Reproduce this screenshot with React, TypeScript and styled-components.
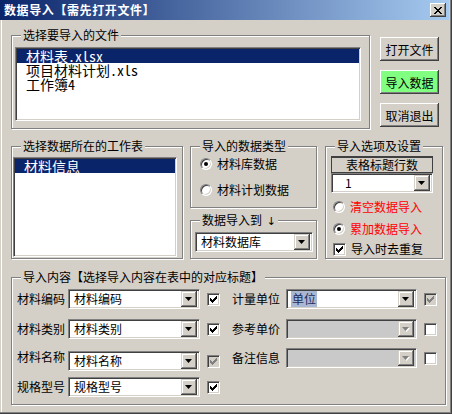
import styled, { createGlobalStyle } from "styled-components";

const FACE = "#d4d0c8";

const GlobalStyle = createGlobalStyle`
  * { box-sizing: border-box; }
  body {
    margin: 0;
    background: ${FACE};
    font-family: "Noto Sans CJK SC", "Liberation Sans", sans-serif;
    font-size: 12px;
    color: #000;
  }
`;

const files = ["材料表.xlsx", "项目材料计划.xls", "工作簿4"];

type FieldData = {
  label: string;
  value?: string;
  gap: number;
  checked?: boolean;
  checkDisabled?: boolean;
  comboDisabled?: boolean;
  highlight?: boolean;
  raise?: boolean;
};

const leftFields: FieldData[] = [
  { label: "材料编码", value: "材料编码", gap: 0, checked: true },
  { label: "材料类别", value: "材料类别", gap: 10, checked: true },
  { label: "材料名称", value: "材料名称", gap: 12, checked: true, checkDisabled: true, raise: true },
  { label: "规格型号", value: "规格型号", gap: 6, checked: true },
];

const rightFields: FieldData[] = [
  { label: "计量单位", value: "单位", gap: 0, checked: true, checkDisabled: true, highlight: true },
  { label: "参考单价", gap: 10, comboDisabled: true },
  { label: "备注信息", gap: 9, comboDisabled: true },
];

const CloseIcon = () => (
  <svg width="8" height="7" viewBox="0 0 8 7">
    <path
      d="M0 0h2v1h-2zM6 0h2v1h-2zM1 1h2v1h-2zM5 1h2v1h-2zM2 2h4v1h-4zM3 3h2v1h-2zM2 4h4v1h-4zM1 5h2v1h-2zM5 5h2v1h-2zM0 6h2v1h-2zM6 6h2v1h-2z"
      fill="#000"
    />
  </svg>
);

const CheckMark = ({ color }: { color: string }) => (
  <svg width="7" height="7" viewBox="0 0 7 7">
    <path
      d="M0 2h1v3h-1zM1 3h1v3h-1zM2 4h1v3h-1zM3 3h1v3h-1zM4 2h1v3h-1zM5 1h1v3h-1zM6 0h1v3h-1z"
      fill={color}
    />
  </svg>
);

const Arrow = ({ disabled }: { disabled?: boolean }) => (
  <svg width="8" height="5" viewBox="0 0 8 5">
    {disabled && <path d="M1 1h7l-3.5 4z" fill="#fff" />}
    <path d="M0 0h7l-3.5 4z" fill={disabled ? "#808080" : "#000"} />
  </svg>
);

const ComboBox = ({
  width,
  value,
  disabled,
  highlight,
  indent = 2,
}: {
  width: number;
  value?: string;
  disabled?: boolean;
  highlight?: boolean;
  indent?: number;
}) => (
  <Combo $w={width} $disabled={disabled}>
    <ComboText $indent={indent}>
      {value && <ComboValue $highlight={highlight}>{value}</ComboValue>}
    </ComboText>
    <DropButton>
      <Arrow disabled={disabled} />
    </DropButton>
  </Combo>
);

const CheckBox = ({ checked, disabled }: { checked?: boolean; disabled?: boolean }) => (
  <CheckFrame $disabled={disabled}>
    {checked && <CheckMark color={disabled ? "#808080" : "#000"} />}
  </CheckFrame>
);

const Radio = ({ checked }: { checked?: boolean }) => (
  <RadioCircle>{checked && <RadioDot />}</RadioCircle>
);

const Field = ({ data, width, labelGap }: { data: FieldData; width: number; labelGap: number }) => (
  <FieldRow $gap={data.gap}>
    <FieldLabel $after={labelGap} $raise={data.raise}>
      {data.label}
    </FieldLabel>
    <ComboBox width={width} value={data.value} disabled={data.comboDisabled} highlight={data.highlight} />
    <CheckSlot>
      <CheckBox checked={data.checked} disabled={data.checkDisabled} />
    </CheckSlot>
  </FieldRow>
);

const App = () => (
  <>
    <GlobalStyle />
    <Window>
      <TitleBar>
        <Title>数据导入【需先打开文件】</Title>
        <CloseButton>
          <CloseIcon />
        </CloseButton>
      </TitleBar>
      <Body>
        <TopRow>
          <Group $w={359} $h={94}>
            <Legend>选择要导入的文件</Legend>
            <GroupBody $pad="11px 0 0 3px">
              <ListBox $w={346} $h={74}>
                {files.map((f, i) => (
                  <ListItem key={f} $selected={i === 0}>
                    {f}
                  </ListItem>
                ))}
              </ListBox>
            </GroupBody>
          </Group>
          <ButtonColumn>
            <PushButton>打开文件</PushButton>
            <PushButton $accent>导入数据</PushButton>
            <PushButton>取消退出</PushButton>
          </ButtonColumn>
        </TopRow>

        <MiddleRow>
          <Group $w={172} $h={113}>
            <Legend>选择数据所在的工作表</Legend>
            <GroupBody $pad="10px 0 0 1px">
              <ListBox $w={164} $h={100}>
                <ListItem $selected>材料信息</ListItem>
              </ListBox>
            </GroupBody>
          </Group>

          <MiddleColumn>
            <Group $w={127} $h={62}>
              <Legend>导入的数据类型</Legend>
              <GroupBody $pad="9px 0 0 9px">
                <OptionRow>
                  <Radio checked />
                  <OptionText>材料库数据</OptionText>
                </OptionRow>
                <OptionRow $gap={10}>
                  <Radio />
                  <OptionText>材料计划数据</OptionText>
                </OptionRow>
              </GroupBody>
            </Group>
            <Group $w={127} $h={39} $gap={12}>
              <Legend>
                数据导入到 <DownArrow>{"\u2193\uFE0E"}</DownArrow>
              </Legend>
              <GroupBody $pad="11px 0 0 4px">
                <ComboBox width={118} value="材料数据库" />
              </GroupBody>
            </Group>
          </MiddleColumn>

          <Group $w={118} $h={113} $gapLeft={8}>
            <Legend>导入选项及设置</Legend>
            <GroupBody $pad="9px 0 0 5px">
              <HeaderBox>表格标题行数</HeaderBox>
              <ComboBox width={102} value="1" indent={10} />
              <OptionRow $gap={6} $indent={2}>
                <Radio />
                <OptionText $red>清空数据导入</OptionText>
              </OptionRow>
              <OptionRow $gap={6} $indent={2}>
                <Radio checked />
                <OptionText $red>累加数据导入</OptionText>
              </OptionRow>
              <OptionRow $gap={4} $indent={2}>
                <CheckBox checked />
                <OptionText>导入时去重复</OptionText>
              </OptionRow>
            </GroupBody>
          </Group>
        </MiddleRow>

        <BottomGroup>
          <Group $w={435} $h={128}>
            <Legend>导入内容【选择导入内容在表中的对应标题】</Legend>
            <GroupBody $pad="11px 0 0 5px" $row>
              <FieldColumn>
                {leftFields.map((f) => (
                  <Field key={f.label} data={f} width={132} labelGap={3} />
                ))}
              </FieldColumn>
              <FieldColumn $gapLeft={12}>
                {rightFields.map((f) => (
                  <Field key={f.label} data={f} width={131} labelGap={6} />
                ))}
              </FieldColumn>
            </GroupBody>
          </Group>
        </BottomGroup>
      </Body>
    </Window>
  </>
);

const Window = styled.div`
  width: 452px;
  height: 414px;
  background: ${FACE};
  display: flex;
  flex-direction: column;
  box-shadow: inset -1px -1px #404040, inset -2px -2px #808080, inset 1px 0 ${FACE}, inset 2px 0 #fff;
`;

const TitleBar = styled.div`
  height: 20px;
  margin-right: 3px;
  padding: 0 3px 0 4px;
  display: flex;
  align-items: center;
  justify-content: space-between;
  background: linear-gradient(to right, #0a246a, #a6caf0);
`;

const Title = styled.span`
  color: #fff;
  font-weight: bold;
  font-size: 12px;
  letter-spacing: 0.6px;
  line-height: 14px;
  white-space: nowrap;
`;

const CloseButton = styled.div`
  width: 16px;
  height: 14px;
  background: ${FACE};
  display: flex;
  align-items: center;
  justify-content: center;
  padding-right: 1px;
  box-shadow: inset -1px -1px #404040, inset 1px 1px #fff, inset -2px -2px #808080, inset 2px 2px ${FACE};
`;

const Body = styled.div`
  display: flex;
  flex-direction: column;
  padding-left: 11px;
`;

const TopRow = styled.div`
  display: flex;
  margin-top: 15px;
`;

const MiddleRow = styled.div`
  display: flex;
  align-items: flex-start;
  margin-top: 17px;
`;

const MiddleColumn = styled.div`
  display: flex;
  flex-direction: column;
  margin-left: 7px;
`;

const BottomGroup = styled.div`
  display: flex;
  margin-top: 18px;
`;

const Group = styled.div<{ $w: number; $h: number; $gap?: number; $gapLeft?: number }>`
  width: ${(p) => p.$w}px;
  height: ${(p) => p.$h}px;
  margin-top: ${(p) => p.$gap ?? 0}px;
  margin-left: ${(p) => p.$gapLeft ?? 0}px;
  flex-shrink: 0;
  border: 1px solid #808080;
  box-shadow: inset 1px 1px #fff, 1px 1px #fff;
  display: flex;
  flex-direction: column;
`;

const Legend = styled.div`
  align-self: flex-start;
  height: 14px;
  line-height: 14px;
  margin: -8px 0 -6px 9px;
  padding: 0 2px;
  background: ${FACE};
  white-space: nowrap;
`;

const DownArrow = styled.span`
  font-family: "DejaVu Sans", sans-serif;
  font-size: 11px;
  color: #000;
  margin-left: 2px;
`;

const GroupBody = styled.div<{ $pad: string; $row?: boolean }>`
  display: flex;
  flex-direction: ${(p) => (p.$row ? "row" : "column")};
  align-items: flex-start;
  padding: ${(p) => p.$pad};
`;

const ListBox = styled.div<{ $w: number; $h: number }>`
  width: ${(p) => p.$w}px;
  height: ${(p) => p.$h}px;
  background: #fff;
  padding: 1px;
  border: 1px solid;
  border-color: #808080 #fff #fff #808080;
  box-shadow: inset 1px 1px #404040, inset -1px -1px ${FACE};
  font-family: "Noto Sans Mono CJK SC", "Liberation Mono", "Noto Sans CJK SC", monospace;
  font-size: 14px;
`;

const ListItem = styled.div<{ $selected?: boolean }>`
  height: 14px;
  line-height: 14px;
  padding-left: 9px;
  white-space: nowrap;
  background: ${(p) => (p.$selected ? "#0a246a" : "transparent")};
  color: ${(p) => (p.$selected ? "#fff" : "#000")};
`;

const ButtonColumn = styled.div`
  display: flex;
  flex-direction: column;
  gap: 9px;
  margin: 2px 0 0 10px;
`;

const PushButton = styled.div<{ $accent?: boolean }>`
  width: 59px;
  height: 24px;
  display: flex;
  align-items: center;
  justify-content: center;
  background: ${(p) => (p.$accent ? "#80ff80" : FACE)};
  box-shadow: inset -1px -1px #404040, inset 1px 1px #fff, inset -2px -2px #808080, inset 2px 2px ${(p) => (p.$accent ? "#80ff80" : FACE)};
  white-space: nowrap;
`;

const OptionRow = styled.div<{ $gap?: number; $indent?: number }>`
  display: flex;
  align-items: center;
  gap: 5px;
  height: 16px;
  margin-top: ${(p) => p.$gap ?? 0}px;
  margin-left: ${(p) => p.$indent ?? 0}px;
`;

const OptionText = styled.span<{ $red?: boolean }>`
  color: ${(p) => (p.$red ? "#ff0000" : "#000")};
  white-space: nowrap;
  line-height: 14px;
`;

const RadioCircle = styled.span`
  width: 12px;
  height: 12px;
  flex-shrink: 0;
  border-radius: 50%;
  background: #fff;
  border: 1px solid;
  border-color: #808080 #fff #fff #808080;
  box-shadow: inset 1px 1px #404040, inset -1px -1px ${FACE};
  display: flex;
  align-items: center;
  justify-content: center;
`;

const RadioDot = styled.span`
  width: 4px;
  height: 4px;
  border-radius: 50%;
  background: #000;
`;

const CheckFrame = styled.span<{ $disabled?: boolean }>`
  width: 13px;
  height: 13px;
  flex-shrink: 0;
  background: ${(p) => (p.$disabled ? FACE : "#fff")};
  border: 1px solid;
  border-color: #808080 #fff #fff #808080;
  box-shadow: inset 1px 1px #404040, inset -1px -1px ${FACE};
  display: flex;
  align-items: center;
  justify-content: center;
`;

const HeaderBox = styled.div`
  width: 102px;
  height: 17px;
  line-height: 14px;
  text-align: center;
  border: 1px solid #404040;
  border-top-width: 2px;
  background: ${FACE};
`;

const Combo = styled.div<{ $w: number; $disabled?: boolean }>`
  width: ${(p) => p.$w}px;
  height: 20px;
  flex-shrink: 0;
  display: flex;
  align-items: center;
  padding: 2px;
  background: ${(p) => (p.$disabled ? "#c9c9c9" : "#fff")};
  border: 1px solid;
  border-color: #808080 #fff #fff #808080;
  box-shadow: inset 1px 1px #404040, inset -1px -1px ${FACE};
`;

const ComboText = styled.span<{ $indent: number }>`
  flex: 1;
  padding-left: ${(p) => p.$indent}px;
  line-height: 16px;
  white-space: nowrap;
  overflow: hidden;
`;

const ComboValue = styled.span<{ $highlight?: boolean }>`
  padding: 0 1px;
  background: ${(p) => (p.$highlight ? "#a9b7d3" : "transparent")};
  color: ${(p) => (p.$highlight ? "#1c2c5c" : "#000")};
`;

const DropButton = styled.span`
  width: 16px;
  height: 16px;
  flex-shrink: 0;
  display: flex;
  align-items: center;
  justify-content: center;
  padding-top: 1px;
  background: ${FACE};
  box-shadow: inset -1px -1px #404040, inset 1px 1px ${FACE}, inset -2px -2px #808080, inset 2px 2px #fff;
`;

const FieldColumn = styled.div<{ $gapLeft?: number }>`
  display: flex;
  flex-direction: column;
  margin-left: ${(p) => p.$gapLeft ?? 0}px;
`;

const FieldRow = styled.div<{ $gap: number }>`
  display: flex;
  align-items: center;
  height: 20px;
  margin-top: ${(p) => p.$gap}px;
`;

const FieldLabel = styled.span<{ $after: number; $raise?: boolean }>`
  width: 48px;
  margin-right: ${(p) => p.$after}px;
  margin-bottom: ${(p) => (p.$raise ? 9 : 0)}px;
  line-height: 14px;
  white-space: nowrap;
`;

const CheckSlot = styled.span`
  display: flex;
  margin-left: 7px;
`;

export default App;
